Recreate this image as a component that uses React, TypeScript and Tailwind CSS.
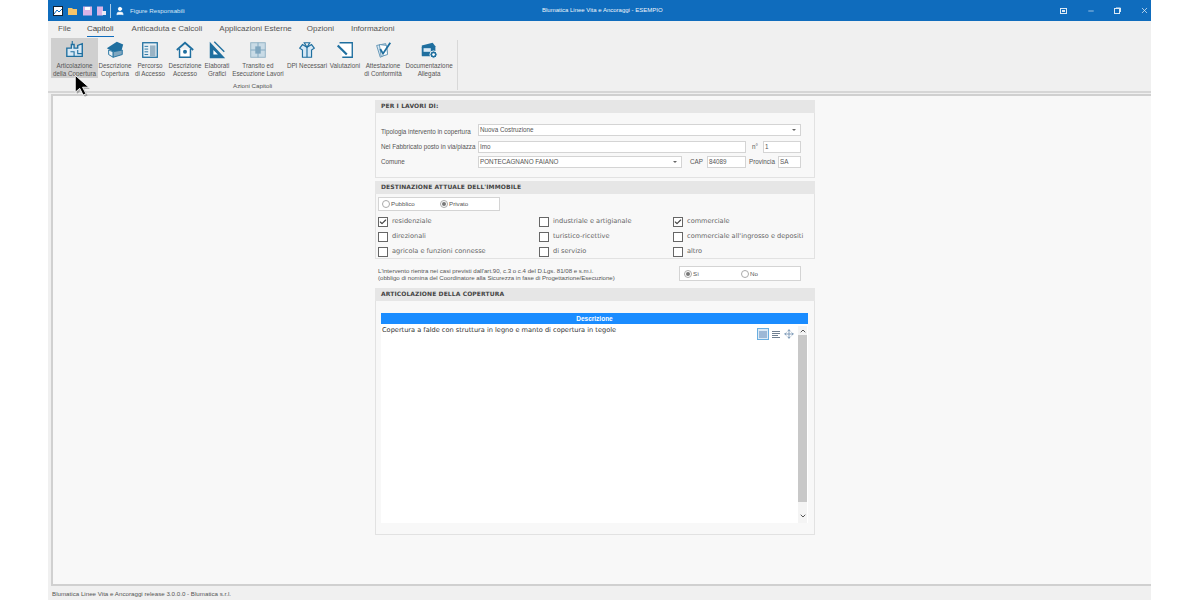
import { Check, Minus, Move, X, ChevronUp, ChevronDown, User } from "lucide-react";
import type { ReactNode } from "react";

const uiFont = "font-['Liberation_Sans',Arial,sans-serif]";

const ribbonIcons: Record<string, ReactNode> = {
	articolazione: (
		<>
			<path d="M2 9h5V5h3v4h4V6l5-2v14H2z" fill="#d7e8f5" stroke="#1f6f9f" strokeWidth="1.5" />
			<path d="M6 13h4v5M14 11v4h5" fill="none" stroke="#1f6f9f" strokeWidth="1.2" />
			<path d="M8 1v4" stroke="#1f6f9f" strokeWidth="1.2" />
		</>
	),
	copertura: (
		<>
			<path d="M2 9 13 2l7 3-2 7-9 1z" fill="#1f6f9f" />
			<path d="M4 11l5 2v6l-5-3z" fill="#e8f0f5" stroke="#1f6f9f" />
			<path d="M9 13l10-2v5L9 19z" fill="#7fa6bf" stroke="#1f6f9f" />
		</>
	),
	percorso: (
		<>
			<rect x="3" y="3" width="16" height="16" fill="#e8f0f5" stroke="#1f6f9f" strokeWidth="1.4" />
			<rect x="11" y="6" width="6" height="12" fill="#9ab3c4" />
			<path d="M5 7h4M5 10h4M5 13h4M5 16h4" stroke="#1f6f9f" />
		</>
	),
	accesso: (
		<>
			<path d="M2 11 11 3l9 8" fill="none" stroke="#1f6f9f" strokeWidth="2" />
			<path d="M5 10v9h12v-9" fill="#fff" stroke="#1f6f9f" strokeWidth="1.6" />
			<circle cx="11" cy="13" r="2.2" fill="#1f6f9f" />
		</>
	),
	grafici: (
		<>
			<path d="M3 2v18h17z" fill="#1f6f9f" />
			<path d="M7 11v5h5z" fill="#fff" />
			<path d="M8 2l11 11" stroke="#1f6f9f" strokeWidth="1.4" />
		</>
	),
	transito: (
		<>
			<rect x="3" y="3" width="16" height="16" fill="#c9dbe6" stroke="#8fb0c4" />
			<path d="M11 3v16M3 11h16" stroke="#7fa6bf" />
			<rect x="8" y="7" width="6" height="8" fill="#7fa6bf" />
		</>
	),
	dpi: (
		<>
			<path d="M6 5l5 3 5-3 3 4-3 2v8H6v-8L3 9z" fill="#d7e8f5" stroke="#1f6f9f" strokeWidth="1.3" />
			<path d="M8 3h6l-3 5zM11 8v11" fill="none" stroke="#1f6f9f" strokeWidth="1.3" />
		</>
	),
	valutazioni: (
		<>
			<path d="M5 3h14v16H8" fill="#fff" stroke="#1f6f9f" strokeWidth="1.5" />
			<path d="M3 6l10 10" stroke="#1f6f9f" strokeWidth="2.4" />
		</>
	),
	attestazione: (
		<>
			<path d="M4 6l10-2 2 11-8 4z" fill="#d7e8f5" stroke="#5f93b3" />
			<path d="M7 5l8 1 1 10-7 2z" fill="#fff" stroke="#5f93b3" />
			<path d="M8 10l3 5 8-12" fill="none" stroke="#1f6f9f" strokeWidth="2" />
		</>
	),
	documentazione: (
		<>
			<path d="M3 6l12-3 3 4v6H4z" fill="#1f6f9f" />
			<rect x="3" y="7" width="14" height="11" rx="1" fill="#1f6f9f" />
			<rect x="5" y="9" width="8" height="4" fill="#d7e8f5" />
			<circle cx="16" cy="16" r="4" fill="#1f6f9f" stroke="#fff" />
			<circle cx="16" cy="16" r="1.5" fill="#fff" />
		</>
	),
};

const ribbonButtons = [
	{ icon: "articolazione", lines: ["Articolazione", "della Copertura"], width: "w-[47px]", active: true },
	{ icon: "copertura", lines: ["Descrizione", "Copertura"], width: "w-[34px]" },
	{ icon: "percorso", lines: ["Percorso", "di Accesso"], width: "w-[36px]" },
	{ icon: "accesso", lines: ["Descrizione", "Accesso"], width: "w-[34px]" },
	{ icon: "grafici", lines: ["Elaborati", "Grafici"], width: "w-[30px]" },
	{ icon: "transito", lines: ["Transito ed", "Esecuzione Lavori"], width: "w-[52px]" },
	{ icon: "dpi", lines: ["DPI Necessari"], width: "w-[46px]" },
	{ icon: "valutazioni", lines: ["Valutazioni"], width: "w-[30px]" },
	{ icon: "attestazione", lines: ["Attestazione", "di Conformità"], width: "w-[46px]" },
	{ icon: "documentazione", lines: ["Documentazione", "Allegata"], width: "w-[46px]" },
];

function RibbonButton({ icon, lines, width, active }: { icon: string; lines: string[]; width: string; active?: boolean }) {
	return (
		<div className={`${width} h-[40px] flex flex-col items-center pt-[2px] ${active ? "bg-[#cfcfcf]" : ""}`}>
			<svg width="20" height="20" viewBox="0 0 22 22" className="shrink-0">
				{ribbonIcons[icon]}
			</svg>
			<div className="mt-[2px] text-[6.3px] leading-[8px] text-[#555] text-center whitespace-nowrap">
				{lines.map((l) => (
					<div key={l}>{l}</div>
				))}
			</div>
		</div>
	);
}

function SectionHeader({ children }: { children: ReactNode }) {
	return (
		<div className="h-[13px] bg-[#e6e6e6] pl-[6px] font-['DejaVu_Sans',sans-serif] font-bold text-[6px] leading-[12px] text-[#444] tracking-[0.1px]">
			{children}
		</div>
	);
}

function Field({ value, className, arrow }: { value: string; className: string; arrow?: boolean }) {
	return (
		<div className={`${className} h-[12px] bg-white border border-[#d4d4d4] pl-[1px] pr-[4px] flex items-center justify-between text-[6.3px] text-[#555]`}>
			<span>{value}</span>
			{arrow && <span className="w-0 h-0 border-x-[2px] border-x-transparent border-t-[2px] border-t-[#666]" />}
		</div>
	);
}

function CheckItem({ label, checked }: { label: string; checked?: boolean }) {
	return (
		<div className="h-[15px] flex items-center gap-[4px]">
			<div className="w-[10px] h-[10px] bg-white border border-[#666] flex items-center justify-center">
				{checked && <Check size={8} strokeWidth={3.5} className="text-[#444]" />}
			</div>
			<span className="font-['DejaVu_Sans',sans-serif] text-[6.6px] text-[#666] whitespace-nowrap pt-[1px]">{label}</span>
		</div>
	);
}

function Radio({ label, checked, className }: { label: string; checked?: boolean; className?: string }) {
	return (
		<div className={`${className ?? ""} flex items-center gap-[1px]`}>
			<div className="w-[8px] h-[8px] rounded-full bg-white border border-[#aaa] flex items-center justify-center">
				{checked && <div className="w-[4px] h-[4px] rounded-full bg-[#777]" />}
			</div>
			<span className="text-[6.2px] text-[#555]">{label}</span>
		</div>
	);
}

export default function App() {
	return (
		<div className={`relative w-[1200px] h-[600px] bg-white overflow-hidden ${uiFont}`}>
			<div className="ml-[48px] w-[1103px] h-[600px] flex flex-col bg-[#f0f0f0]">
				{/* Title bar */}
				<div className="h-[21px] shrink-0 bg-[#0f6cbd] flex items-center text-white relative">
					<div className="flex items-center ml-[5px] gap-[5px]">
						<svg width="10" height="10" viewBox="0 0 10 10">
							<rect x="0.5" y="0.5" width="9" height="9" fill="#fff" stroke="#123" />
							<path d="M1 8l3-4 2 2 3-3" fill="none" stroke="#0f6cbd" />
						</svg>
						<svg width="10" height="10" viewBox="0 0 10 10">
							<path d="M0 2h4l1 1h4v6H0z" fill="#f5c469" />
						</svg>
						<svg width="9" height="10" viewBox="0 0 9 10">
							<rect width="9" height="9" y="0.5" fill="#d9b3e6" />
							<rect x="2" y="1" width="5" height="3" fill="#fff" />
						</svg>
						<svg width="9" height="10" viewBox="0 0 9 10">
							<rect width="6" height="9" y="0.5" fill="#d9b3e6" />
							<rect x="5" y="5" width="4" height="4" fill="#e8e8f5" />
						</svg>
					</div>
					<div className="ml-[4px] w-px h-[14px] bg-[#a9cbe8]" />
					<User size={10} fill="white" className="ml-[4px]" />
					<span className="ml-[5px] text-[6.2px] text-[#d9e8f5]">Figure Responsabili</span>
					<span className="absolute left-[494px] text-[6px] text-[#eef5fb]">Blumatica Linee Vita e Ancoraggi - ESEMPIO</span>
					<div className="ml-auto flex items-center">
						<svg width="7" height="6" viewBox="0 0 7 6" className="mr-[20px]">
							<rect x="0.5" y="0.5" width="6" height="5" fill="none" stroke="#dbe9f5" />
							<rect x="2" y="2" width="3" height="2" fill="#dbe9f5" />
						</svg>
						<Minus size={8} className="mr-[19px] text-[#dbe9f5]" />
						<svg width="7" height="7" viewBox="0 0 7 7" className="mr-[19px]">
							<rect x="0.5" y="1.5" width="5" height="5" fill="none" stroke="#dbe9f5" />
							<path d="M2 1h4.5v4" fill="none" stroke="#dbe9f5" />
						</svg>
						<X size={9} className="mr-[2px] text-[#dbe9f5]" />
					</div>
				</div>

				{/* Tabs */}
				<div className="h-[16px] shrink-0 flex items-center text-[8px] text-[#555] leading-[16px]">
					<span className="ml-[10px]">File</span>
					<span className="ml-[16px] relative text-[#444]">
						Capitoli
						<span className="absolute left-0 right-0 bottom-0 h-[1.5px] bg-[#0f6cbd]" />
					</span>
					<span className="ml-[18px]">Anticaduta e Calcoli</span>
					<span className="ml-[17px]">Applicazioni Esterne</span>
					<span className="ml-[15px]">Opzioni</span>
					<span className="ml-[17px]">Informazioni</span>
				</div>

				{/* Ribbon */}
				<div className="h-[56px] shrink-0 flex pl-[3px] pt-[1px] border-b-2 border-[#d6d6d6]">
					<div className="w-[401px] flex flex-col">
						<div className="flex">
							{ribbonButtons.map((b) => (
								<RibbonButton key={b.icon} {...b} />
							))}
						</div>
						<div className="mt-[4px] ml-[182px] text-[6.2px] leading-[8px] text-[#555]">Azioni Capitoli</div>
					</div>
					<div className="ml-[5px] mt-[2px] w-px h-[50px] bg-[#d8d8d8]" />
				</div>

				{/* Content */}
				<div className="ml-[3px] mt-[1px] flex-1 bg-[#f8f8f8] border-2 border-[#d0d0d0] border-r-0 pt-[4px] pl-[322px]">
					<div className="w-[440px] h-[435px] flex flex-col">
						<SectionHeader>PER I LAVORI DI:</SectionHeader>
						<div className="h-[65px] border border-t-0 border-[#e2e2e2] pt-[11px] pl-[5px] text-[6.3px] text-[#555] flex flex-col">
							<div className="flex items-center h-[12px] whitespace-nowrap">
								<span className="w-[97px] mt-[3px]">Tipologia intervento in copertura</span>
								<Field value="Nuova Costruzione" className="w-[323px]" arrow />
							</div>
							<div className="flex items-center h-[12px] mt-[5px] whitespace-nowrap">
								<span className="w-[97px]">Nel Fabbricato posto in via/piazza</span>
								<Field value="Imo" className="w-[268px]" />
								<span className="ml-[6px] w-[11px]">n°</span>
								<Field value="1" className="w-[38px]" />
							</div>
							<div className="flex items-center h-[12px] mt-[3px] whitespace-nowrap">
								<span className="w-[97px]">Comune</span>
								<Field value="PONTECAGNANO FAIANO" className="w-[204px]" arrow />
								<span className="ml-[8px] w-[17px]">CAP</span>
								<Field value="84089" className="w-[39px]" />
								<span className="ml-[3px] w-[29px]">Provincia</span>
								<Field value="SA" className="w-[23px]" />
							</div>
						</div>

						<div className="mt-[3px]">
							<SectionHeader>DESTINAZIONE ATTUALE DELL'IMMOBILE</SectionHeader>
						</div>
						<div className="h-[65px] border border-t-0 border-[#e2e2e2] pt-[3px] pl-[2px]">
							<div className="w-[122px] h-[14px] bg-white border border-[#d4d4d4] pl-[3px] flex items-center">
								<Radio label="Pubblico" className="w-[58px]" />
								<Radio label="Privato" checked />
							</div>
							<div className="mt-[3px] grid grid-cols-[161px_134px_auto]">
								<CheckItem label="residenziale" checked />
								<CheckItem label="industriale e artigianale" />
								<CheckItem label="commerciale" checked />
								<CheckItem label="direzionali" />
								<CheckItem label="turistico-ricettive" />
								<CheckItem label="commerciale all'ingrosso e depositi" />
								<CheckItem label="agricola e funzioni connesse" />
								<CheckItem label="di servizio" />
								<CheckItem label="altro" />
							</div>
						</div>

						<div className="h-[29px] flex items-center pl-[3px] text-[6.1px] leading-[7px] text-[#555]">
							<div className="w-[301px] whitespace-nowrap">
								<div>L'intervento rientra nei casi previsti dall'art.90, c.3 o c.4 del D.Lgs. 81/08 e s.m.i.</div>
								<div>(obbligo di nomina del Coordinatore alla Sicurezza in fase di Progettazione/Esecuzione)</div>
							</div>
							<div className="w-[122px] h-[15px] bg-white border border-[#d4d4d4] pl-[4px] flex items-center">
								<Radio label="Sì" checked className="w-[57px]" />
								<Radio label="No" />
							</div>
						</div>

						<SectionHeader>ARTICOLAZIONE DELLA COPERTURA</SectionHeader>
						<div className="flex-1 border border-t-0 border-[#e2e2e2] pl-[5px] pt-[12px]">
							<div className="w-[427px] h-[11px] bg-[#1a8cff] text-white text-center font-bold text-[6.5px] leading-[11px]">Descrizione</div>
							<div className="relative w-[427px] h-[199px] bg-white font-['DejaVu_Sans',sans-serif] text-[6.6px] leading-[12px] text-[#333] pl-[1px]">
								Copertura a falde con struttura in legno e manto di copertura in tegole
								<div className="absolute left-[376px] top-[4px] flex items-center gap-[2px]">
									<div className="w-[12px] h-[12px] border border-[#6aaee0] bg-[#dceaf6] flex items-center justify-center">
										<div className="w-[8px] h-[7px] bg-[#9db8d6]" />
									</div>
									<svg width="8" height="7" viewBox="0 0 8 7" className="ml-[1px]">
										<path d="M0 .5h8M0 2.5h8M0 4.5h6M0 6.5h8" stroke="#6f7f90" />
									</svg>
									<Move size={10} className="ml-[2px] text-[#6f8fb0]" />
								</div>
								<div className="absolute left-[417px] top-[2px] w-[9px] h-[197px] bg-[#f4f4f4] flex flex-col items-center">
									<ChevronUp size={8} strokeWidth={3} className="mt-[1px] shrink-0 text-[#555]" />
									<div className="w-[9px] h-[167px] bg-[#c8c8c8]" />
									<ChevronDown size={8} strokeWidth={3} className="mt-[10px] shrink-0 text-[#555]" />
								</div>
							</div>
						</div>
					</div>
				</div>

				{/* Status bar */}
				<div className="h-[14px] shrink-0 pl-[4px] pt-[1px] text-[6.2px] leading-[14px] text-[#555]">
					Blumatica Linee Vita e Ancoraggi release 3.0.0.0 - Blumatica s.r.l.
				</div>
			</div>

			{/* Mouse pointer */}
			<svg width="18" height="23" viewBox="0 0 16 20" className="absolute left-[73px] top-[74px]">
				<path d="M3.5 2.5v15l4-3.5 3 6 2.5-1.2-3-5.8H15z" fill="#000" opacity="0.25" />
				<path d="M2 1v15l4-3.5 3 6 2.5-1.2-3-5.8H14z" fill="#000" stroke="#fff" strokeWidth="0.8" />
			</svg>
		</div>
	);
}
